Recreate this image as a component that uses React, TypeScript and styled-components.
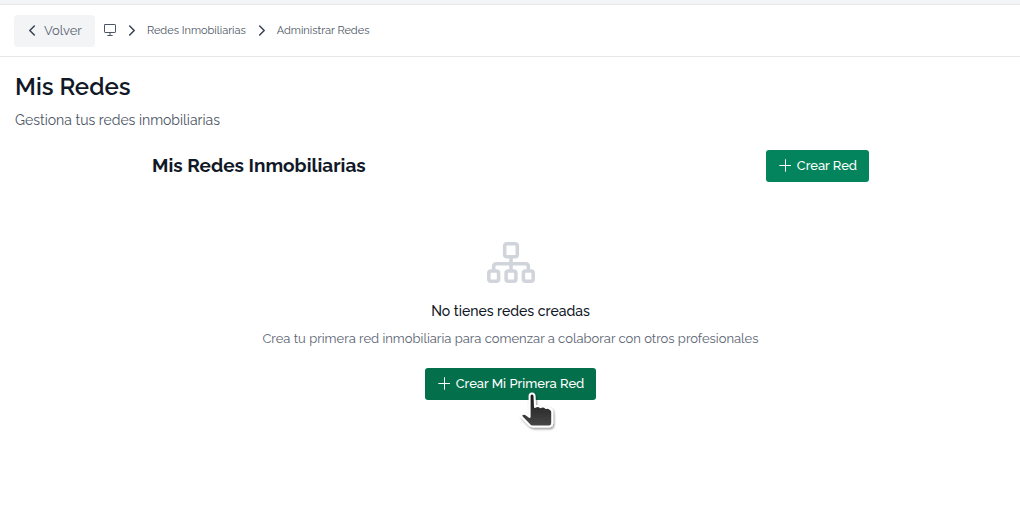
import React from "react";
import styled, { createGlobalStyle } from "styled-components";

const GlobalStyle = createGlobalStyle`
  *, *::before, *::after { box-sizing: border-box; }
  body {
    margin: 0;
    background: #ffffff;
    color: #111827;
    font-family: Raleway, Lato, "Liberation Sans", sans-serif;
    font-size: 14px;
  }
  h1, h2, h3, p { margin: 0; }
`;

const TopStrip = styled.div`
  height: 5px;
  background: #f3f4f6;
  border-bottom: 1px solid #e5e7eb;
`;

const NavBar = styled.nav`
  display: flex;
  align-items: center;
  height: 52px;
  padding: 0 14px;
  gap: 9px;
  border-bottom: 1px solid #e5e7eb;
`;

const BackButton = styled.button`
  display: flex;
  align-items: center;
  gap: 8px;
  height: 32px;
  padding: 0 13px 0 14px;
  border: 0;
  border-radius: 4px;
  background: #f3f4f6;
  color: #5b6472;
  font-family: inherit;
  font-size: 13px;
  line-height: 20px;
  cursor: pointer;
`;

const Crumbs = styled.ol`
  display: flex;
  align-items: center;
  gap: 12px;
  margin: 0;
  padding: 0;
  list-style: none;
`;

const Crumb = styled.li`
  display: flex;
  align-items: center;
  gap: 11px;
`;

const CrumbLink = styled.a`
  display: flex;
  padding-top: 1px;
  color: #4b5563;
  font-size: 11px;
  line-height: 16px;
  text-decoration: none;
`;

const Page = styled.main`
  padding: 14px 14px 14px 15px;
`;

const PageTitle = styled.h1`
  font-size: 24px;
  font-weight: 600;
  line-height: 32px;
`;

const PageSubtitle = styled.p`
  margin-top: 6px;
  color: #4b5563;
  font-size: 14px;
  line-height: 22px;
`;

const Section = styled.section`
  max-width: 717px;
  margin: 19px auto 0;
`;

const SectionHeader = styled.header`
  display: flex;
  align-items: flex-start;
  justify-content: space-between;
`;

const SectionTitle = styled.h2`
  font-size: 19px;
  font-weight: 700;
  line-height: 30px;
`;

const PrimaryButton = styled.button<{ $active?: boolean }>`
  display: flex;
  align-items: center;
  gap: 6px;
  height: 32px;
  padding: 0 12px;
  border: 0;
  border-radius: 3px;
  background: ${({ $active }) => ($active ? "#036f4b" : "#03845c")};
  color: #ffffff;
  font-family: inherit;
  font-size: 13px;
  font-weight: 500;
  line-height: 20px;
  white-space: nowrap;
  cursor: pointer;
`;

const EmptyState = styled.div`
  display: flex;
  flex-direction: column;
  align-items: center;
  padding: 60px 0;
  text-align: center;
`;

const EmptyTitle = styled.h3`
  margin-top: 17px;
  font-size: 14px;
  font-weight: 500;
  line-height: 22px;
`;

const EmptyText = styled.p`
  margin: 7px 0 19px;
  color: #5b6472;
  font-size: 13px;
  line-height: 20px;
`;

const PointerAnchor = styled.div`
  position: relative;
`;

const Pointer = styled.svg`
  position: absolute;
  top: 22px;
  left: 93px;
  pointer-events: none;
`;

const Chevron = ({ back }: { back?: boolean }) => (
  <svg width="8" height="12" viewBox="0 0 8 12" fill="none" stroke="#374151" strokeWidth="1.5" strokeLinecap="round" strokeLinejoin="round" aria-hidden="true">
    <path d={back ? "M6.3 1 1.8 5.500l4.500 4.500" : "M1.700 1 6.200 5.500l-4.500 4.500"} />
  </svg>
);

const MonitorIcon = () => (
  <svg width="12" height="14" viewBox="0 0 12 14" fill="none" stroke="#4b5563" strokeLinecap="round" strokeLinejoin="round" aria-hidden="true">
    <rect x="0.5" y="0.5" width="11" height="8" rx="0.6" />
    <path d="M6 8.500v3M3.700 11.500h4.600" />
  </svg>
);

const PlusIcon = () => (
  <svg width="13" height="14" viewBox="0 0 13 14" fill="none" stroke="#ffffff" strokeLinecap="round" aria-hidden="true">
    <path d="M7.500 0.700v11.600M1.700 6.500h11" />
  </svg>
);

const NetworkIcon = () => (
  <svg width="48" height="41" viewBox="0 0 48 41" fill="none" stroke="#d1d5db" strokeWidth="3.6" strokeLinecap="round" strokeLinejoin="round" aria-hidden="true">
    <rect x="17.700" y="1.800" width="12.600" height="13" rx="2.200" />
    <path d="M24 15v12M6.700 27v-2.500q0-2.800 2.800-2.800h29q2.800 0 2.800 2.800v2.500" />
    <rect x="1.800" y="29" width="9.800" height="10.200" rx="2.200" />
    <rect x="19.100" y="29" width="9.800" height="10.200" rx="2.200" />
    <rect x="36.400" y="29" width="9.800" height="10.200" rx="2.200" />
  </svg>
);

export default function App() {
  return (
    <>
      <GlobalStyle />
      <TopStrip />
      <NavBar aria-label="Ruta">
        <BackButton type="button">
          <Chevron back />
          Volver
        </BackButton>
        <Crumbs>
          <Crumb>
            <CrumbLink href="#inicio" aria-label="Inicio">
              <MonitorIcon />
            </CrumbLink>
          </Crumb>
          <Crumb>
            <Chevron />
            <CrumbLink href="#redes">Redes Inmobiliarias</CrumbLink>
          </Crumb>
          <Crumb>
            <Chevron />
            <CrumbLink href="#administrar" aria-current="page">Administrar Redes</CrumbLink>
          </Crumb>
        </Crumbs>
      </NavBar>
      <Page>
        <PageTitle>Mis Redes</PageTitle>
        <PageSubtitle>Gestiona tus redes inmobiliarias</PageSubtitle>
        <Section>
          <SectionHeader>
            <SectionTitle>Mis Redes Inmobiliarias</SectionTitle>
            <PrimaryButton type="button">
              <PlusIcon />
              Crear Red
            </PrimaryButton>
          </SectionHeader>
          <EmptyState>
            <NetworkIcon />
            <EmptyTitle>No tienes redes creadas</EmptyTitle>
            <EmptyText>Crea tu primera red inmobiliaria para comenzar a colaborar con otros profesionales</EmptyText>
            <PointerAnchor>
              <PrimaryButton type="button" $active>
                <PlusIcon />
                Crear Mi Primera Red
              </PrimaryButton>
              <Pointer width="42" height="44" viewBox="0 0 42 44" aria-hidden="true">
                <defs>
                  <linearGradient id="hand" x1="0" y1="0" x2="0" y2="1">
                    <stop offset="0" stopColor="#161616" />
                    <stop offset="1" stopColor="#484848" />
                  </linearGradient>
                  <filter id="shade" filterUnits="userSpaceOnUse" x="0" y="0" width="42" height="44">
                    <feDropShadow dx="1" dy="1.500" stdDeviation="1" floodOpacity="0.450" />
                  </filter>
                </defs>
                <path
                  d="M11.600 6Q11.600 3.400 14 3.400T16.500 6L17 17Q20 15 22.500 17.200Q25.500 15.500 28 18Q30.500 17 32 19Q34.200 19.500 34.200 22V33Q34.200 36.500 31 36.500H15Q12.500 36.500 11 34.500L3.800 27Q2.600 25 4.500 24Q6.500 23.200 8.500 24.600L11.600 27Z"
                  fill="url(#hand)"
                  stroke="#ffffff"
                  strokeWidth="2"
                  strokeLinejoin="round"
                  filter="url(#shade)"
                />
              </Pointer>
            </PointerAnchor>
          </EmptyState>
        </Section>
      </Page>
    </>
  );
}
